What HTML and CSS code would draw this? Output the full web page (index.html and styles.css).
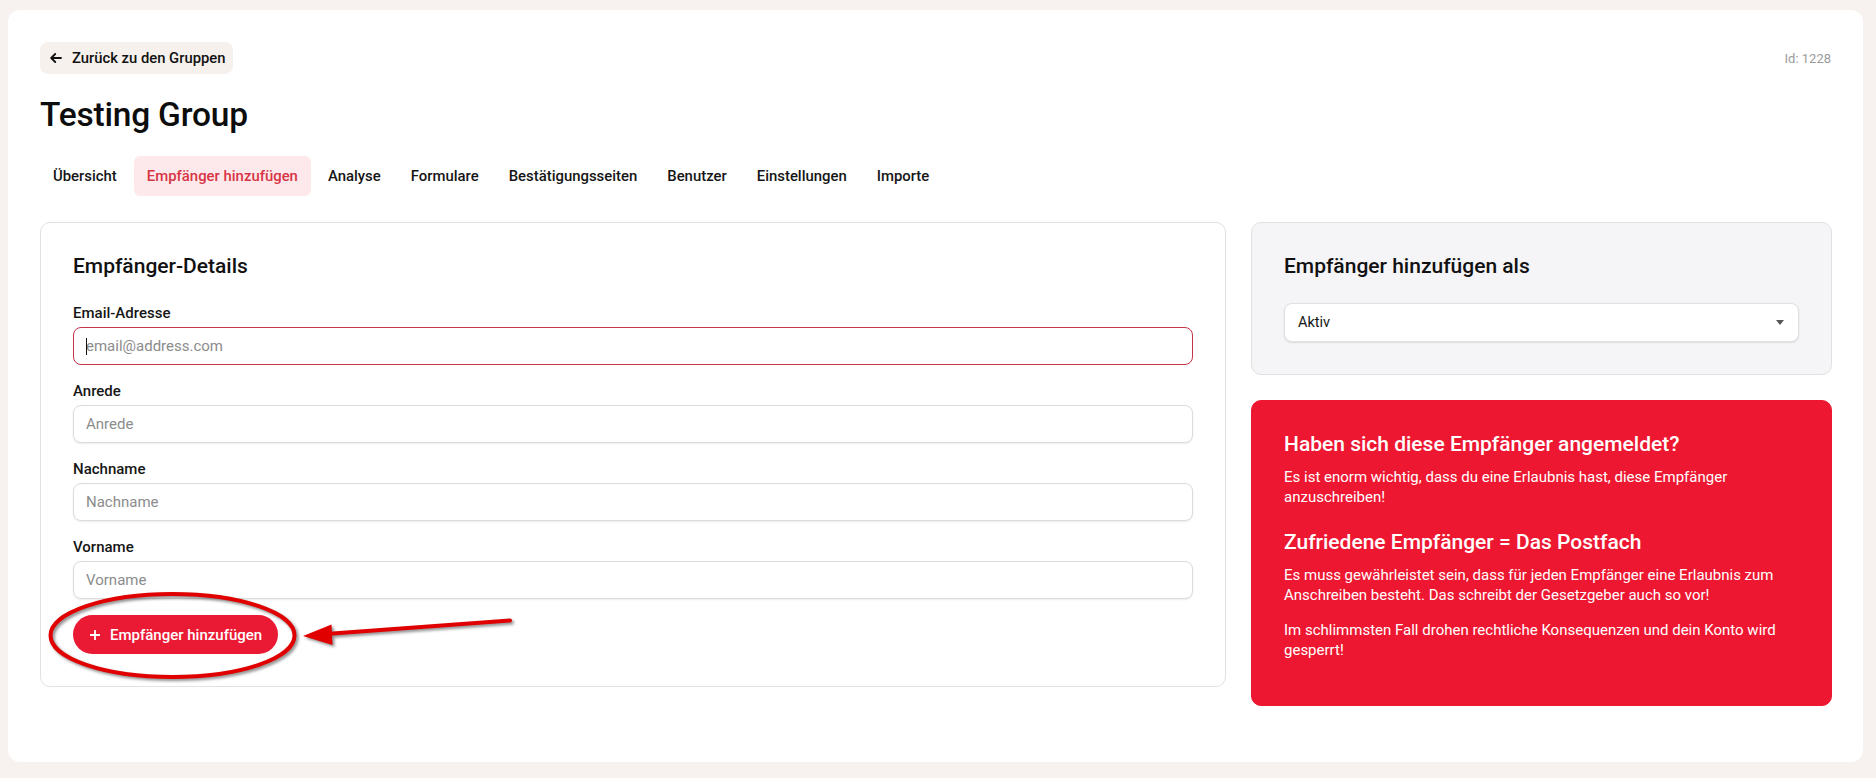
FILE: index.html
```html
<!DOCTYPE html>
<html lang="de">
<head>
<meta charset="utf-8">
<title>Testing Group</title>
<link rel="stylesheet" href="styles.css">
</head>
<body>
<main class="page">
  <div class="topbar">
    <a class="back-btn" href="#">
      <svg class="back-icon" width="12" height="10" viewBox="0 0 12 10"><path d="M11 5H1.5M5.2 1L1.2 5l4 4" fill="none" stroke="#111" stroke-width="1.8" stroke-linecap="round" stroke-linejoin="round"/></svg>
      <span>Zurück zu den Gruppen</span>
    </a>
    <span class="group-id">Id: 1228</span>
  </div>

  <h1 class="title">Testing Group</h1>

  <nav class="tabs">
    <a class="tab" href="#">Übersicht</a>
    <a class="tab active" href="#">Empfänger hinzufügen</a>
    <a class="tab" href="#">Analyse</a>
    <a class="tab" href="#">Formulare</a>
    <a class="tab" href="#">Bestätigungsseiten</a>
    <a class="tab" href="#">Benutzer</a>
    <a class="tab" href="#">Einstellungen</a>
    <a class="tab" href="#">Importe</a>
  </nav>

  <div class="content">
    <section class="card details">
      <h2 class="card-title">Empfänger-Details</h2>
      <div class="field">
        <label class="label">Email-Adresse</label>
        <div class="input-wrap">
          <input class="input focused" type="text" placeholder="email@address.com">
          <span class="caret"></span>
        </div>
      </div>
      <div class="field">
        <label class="label">Anrede</label>
        <input class="input" type="text" placeholder="Anrede">
      </div>
      <div class="field">
        <label class="label">Nachname</label>
        <input class="input" type="text" placeholder="Nachname">
      </div>
      <div class="field">
        <label class="label">Vorname</label>
        <input class="input" type="text" placeholder="Vorname">
      </div>
      <button class="add-btn" type="button">
        <svg width="10" height="10" viewBox="0 0 10 10"><path d="M5 0.5v9M0.5 5h9" stroke="#fff" stroke-width="1.8" stroke-linecap="round"/></svg>
        <span>Empfänger hinzufügen</span>
      </button>
    </section>

    <aside class="side">
      <section class="card gray">
        <h2 class="card-title">Empfänger hinzufügen als</h2>
        <div class="select">
          <span>Aktiv</span>
          <svg width="8" height="5" viewBox="0 0 8 5"><path d="M0 0h8L4 5z" fill="#555"/></svg>
        </div>
      </section>
      <section class="card warn">
        <h3 class="warn-title">Haben sich diese Empfänger angemeldet?</h3>
        <p class="warn-text">Es ist enorm wichtig, dass du eine Erlaubnis hast, diese Empfänger anzuschreiben!</p>
        <h3 class="warn-title second">Zufriedene Empfänger = Das Postfach</h3>
        <p class="warn-text">Es muss gewährleistet sein, dass für jeden Empfänger eine Erlaubnis zum Anschreiben besteht. Das schreibt der Gesetzgeber auch so vor!</p>
        <p class="warn-text">Im schlimmsten Fall drohen rechtliche Konsequenzen und dein Konto wird gesperrt!</p>
      </section>
    </aside>
  </div>
</main>

<svg class="annotation" width="1876" height="778" viewBox="0 0 1876 778">
  <g class="anno-shape">
    <ellipse cx="172.5" cy="635.5" rx="122" ry="41.5" fill="none" stroke="#e10000" stroke-width="4"/>
    <path d="M510 620.5 L326 634" fill="none" stroke="#e10000" stroke-width="4" stroke-linecap="round"/>
    <path d="M303 636 L331.5 624.5 L332.5 645 Z" fill="#e10000"/>
  </g>
</svg>
</body>
</html>
```
FILE: styles.css
```css
* { box-sizing: border-box; }

html, body {
  margin: 0;
  height: 100%;
}

body {
  position: relative;
  background: #f7f2ef;
  font-family: Roboto, "Liberation Sans", Arial, sans-serif;
  color: #151515;
  padding: 10px 13px 0 8px;
}

.page {
  background: #ffffff;
  border-radius: 12px;
  height: 752px;
  padding: 32px 31px 32px 32px;
}

.topbar {
  display: flex;
  justify-content: space-between;
  align-items: center;
}

.back-btn {
  display: inline-flex;
  align-items: center;
  gap: 10px;
  height: 32px;
  padding: 0 8px 0 10px;
  background: #f7f1ee;
  border-radius: 8px;
  color: #111;
  text-decoration: none;
  font-size: 14.8px;
  font-weight: 500;
}

.back-icon { display: block; }

.group-id {
  font-size: 13px;
  color: #9b9b9b;
  margin-right: 1px;
}

.title {
  margin: 21px 0 0;
  font-size: 33.5px;
  line-height: 40px;
  font-weight: 500;
  color: #0d0d0d;
  letter-spacing: -0.2px;
}

.tabs {
  display: flex;
  gap: 4px;
  margin-top: 21px;
}

.tab {
  display: block;
  height: 40px;
  line-height: 40px;
  padding: 0 13px;
  border-radius: 6px;
  font-size: 14.9px;
  font-weight: 500;
  color: #161616;
  text-decoration: none;
}

.tab.active {
  background: #fde9eb;
  color: #d73545;
}

.content {
  display: grid;
  grid-template-columns: 1186px 581px;
  gap: 25px;
  align-items: start;
  margin-top: 26px;
}

.card {
  border: 1px solid #e1e1e1;
  border-radius: 10px;
  padding: 29px 32px 32px;
}

.card-title {
  margin: 0 0 23px;
  font-size: 21px;
  line-height: 28px;
  font-weight: 500;
  color: #111;
}

.field {
  display: flex;
  flex-direction: column;
  margin-bottom: 16px;
}

.label {
  font-size: 15px;
  line-height: 20px;
  font-weight: 500;
  margin-bottom: 4px;
  color: #161616;
}

.input-wrap {
  position: relative;
}

.input {
  display: block;
  width: 100%;
  height: 38px;
  border: 1px solid #dcdcdc;
  border-radius: 8px;
  padding: 0 12px;
  font-family: inherit;
  font-size: 15px;
  color: #111;
  background: #fff;
  box-shadow: 0 1px 2px rgba(0, 0, 0, 0.08);
  outline: none;
}

.input::placeholder { color: #8c8c8c; }

.input.focused {
  border-color: #c43548;
  box-shadow: none;
}

.caret {
  position: absolute;
  left: 13px;
  top: 11px;
  width: 1px;
  height: 17px;
  background: #111;
}

.add-btn {
  display: inline-flex;
  align-items: center;
  gap: 10px;
  height: 39px;
  padding: 0 16px 0 17px;
  border: none;
  border-radius: 20px;
  background: #eb1a34;
  color: #fff;
  font-family: inherit;
  font-size: 15px;
  font-weight: 500;
}

.add-btn svg { display: block; }

.side {
  display: flex;
  flex-direction: column;
  gap: 25px;
}

.card.gray {
  background: #f5f5f7;
}

.select {
  display: flex;
  justify-content: space-between;
  align-items: center;
  height: 39px;
  padding: 0 14px 0 13px;
  background: #fff;
  border: 1px solid #e0e0e0;
  border-radius: 8px;
  box-shadow: 0 1px 2px rgba(0, 0, 0, 0.1);
  font-size: 14.5px;
  color: #151515;
}

.select svg { display: block; }

.card.warn {
  background: #ee1731;
  border-color: #ee1731;
  color: #fff;
  padding-bottom: 30px;
}

.warn-title {
  margin: 0 0 9px;
  font-size: 21px;
  line-height: 28px;
  font-weight: 500;
}

.warn-title.second { margin-top: 21px; }

.warn-text {
  margin: 0 0 15px;
  font-size: 15px;
  line-height: 20px;
}

.annotation {
  position: absolute;
  left: 0;
  top: 0;
  pointer-events: none;
}

.anno-shape {
  filter: drop-shadow(2px 2px 1.5px rgba(0, 0, 0, 0.45));
}
```
